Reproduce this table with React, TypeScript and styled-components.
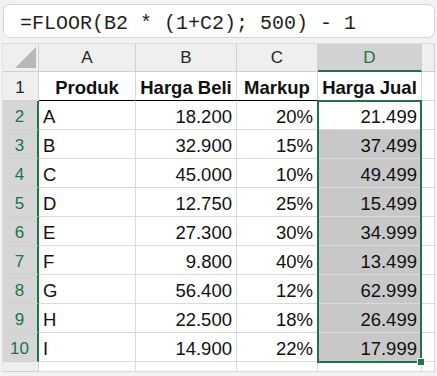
import { Fragment } from 'react'
import styled, { createGlobalStyle } from 'styled-components'

const GlobalStyle = createGlobalStyle`
  html, body {
    margin: 0;
    padding: 0;
    background: #f2f2f2;
  }
`

const rows = [
  { name: 'A', buy: '18.200', markup: '20%', sell: '21.499' },
  { name: 'B', buy: '32.900', markup: '15%', sell: '37.499' },
  { name: 'C', buy: '45.000', markup: '10%', sell: '49.499' },
  { name: 'D', buy: '12.750', markup: '25%', sell: '15.499' },
  { name: 'E', buy: '27.300', markup: '30%', sell: '34.999' },
  { name: 'F', buy: '9.800', markup: '40%', sell: '13.499' },
  { name: 'G', buy: '56.400', markup: '12%', sell: '62.999' },
  { name: 'H', buy: '22.500', markup: '18%', sell: '26.499' },
  { name: 'I', buy: '14.900', markup: '22%', sell: '17.999' },
]

const GREEN = '#217346'
const GRID = '#dadada'

const Page = styled.div`
  width: 437px;
  height: 376px;
  overflow: hidden;
  padding-top: 4px;
  box-sizing: border-box;
`

const FormulaBar = styled.div`
  margin: 0 2px 0 3px;
  height: 34px;
  box-sizing: border-box;
  background: #ffffff;
  border: 1px solid #d4d4d4;
  border-radius: 7px;
  padding: 6px 0 0 16px;
  font-family: 'Liberation Mono', monospace;
  font-size: 20px;
  line-height: 26px;
  color: #1f1f1f;
  white-space: pre;
`

const Sheet = styled.div`
  position: relative;
  margin: 5px 0 0 2px;
  width: 433px;
  display: grid;
  grid-template-columns: 36px 97px 101px 81px 104px 13px;
  grid-template-rows: 28px repeat(10, 29px) 10px;
  border-top: 1px solid #dcdcdc;
  border-left: 1px solid #e0e0e0;
  box-sizing: border-box;
  font-family: 'Liberation Sans', Arial, sans-serif;
`

const Corner = styled.div`
  background: #efefef;
  border-right: 1px solid #d0d0d0;
  border-bottom: 1px solid #d0d0d0;
  display: flex;
  align-items: flex-end;
  justify-content: flex-end;
  padding: 0 2px 3px 0;
  box-sizing: border-box;
`

const ColHeader = styled.div<{ $active?: boolean }>`
  background: ${(p) => (p.$active ? '#d2d2d2' : '#efefef')};
  color: ${(p) => (p.$active ? GREEN : '#262626')};
  border-right: 1px solid #d0d0d0;
  border-bottom: ${(p) => (p.$active ? `2px solid ${GREEN}` : '1px solid #d0d0d0')};
  box-sizing: border-box;
  font-size: 17px;
  line-height: 1;
  display: flex;
  align-items: flex-end;
  justify-content: center;
  padding-bottom: ${(p) => (p.$active ? '4px' : '5px')};
`

const RowHeader = styled.div<{ $active?: boolean }>`
  background: ${(p) => (p.$active ? '#d6d6d6' : '#efefef')};
  color: ${(p) => (p.$active ? GREEN : '#262626')};
  border-right: ${(p) => (p.$active ? `2px solid ${GREEN}` : '1px solid #d0d0d0')};
  border-bottom: 1px solid #d0d0d0;
  box-sizing: border-box;
  font-size: 17px;
  line-height: 1;
  display: flex;
  align-items: flex-end;
  justify-content: center;
  padding: 0 1px 4px 0;
`

const Cell = styled.div<{ $align?: 'left' | 'right' | 'center'; $bold?: boolean; $selected?: boolean; $head?: boolean }>`
  background: ${(p) => (p.$selected ? '#c8c8c8' : '#ffffff')};
  border-right: 1px solid ${GRID};
  border-bottom: 1px solid ${(p) => (p.$head ? '#000000' : GRID)};
  box-sizing: border-box;
  font-size: 18.5px;
  font-weight: ${(p) => (p.$bold ? 700 : 400)};
  color: #111111;
  line-height: 1;
  display: flex;
  align-items: flex-end;
  justify-content: ${(p) => (p.$align === 'right' ? 'flex-end' : p.$align === 'center' ? 'center' : 'flex-start')};
  padding: 0 4px 3px 4px;
  white-space: nowrap;
`

const SelectionBox = styled.div`
  position: absolute;
  left: 314px;
  top: 56px;
  width: 105px;
  height: 263px;
  border: 2px solid ${GREEN};
  box-sizing: border-box;
  pointer-events: none;
`

const FillHandle = styled.div`
  position: absolute;
  right: -5px;
  bottom: -5px;
  width: 6px;
  height: 6px;
  background: ${GREEN};
  border: 1px solid #ffffff;
`

const SelectAll = () => (
  <svg width="21" height="21" viewBox="0 0 21 21">
    <polygon points="21,0 21,21 0,21" fill="#b8b8b8" />
  </svg>
)

export default function App() {
  return (
    <Page>
      <GlobalStyle />
      <FormulaBar>=FLOOR(B2 * (1+C2); 500) - 1</FormulaBar>
      <Sheet>
        <Corner>
          <SelectAll />
        </Corner>
        <ColHeader>A</ColHeader>
        <ColHeader>B</ColHeader>
        <ColHeader>C</ColHeader>
        <ColHeader $active>D</ColHeader>
        <ColHeader />

        <RowHeader>1</RowHeader>
        <Cell $align="center" $bold $head>Produk</Cell>
        <Cell $align="center" $bold $head>Harga Beli</Cell>
        <Cell $align="center" $bold $head>Markup</Cell>
        <Cell $align="center" $bold $head>Harga Jual</Cell>
        <Cell />

        {rows.map((r, i) => (
          <Fragment key={r.name}>
            <RowHeader $active>{i + 2}</RowHeader>
            <Cell>{r.name}</Cell>
            <Cell $align="right">{r.buy}</Cell>
            <Cell $align="right">{r.markup}</Cell>
            <Cell $align="right" $selected={i > 0}>
              {r.sell}
            </Cell>
            <Cell />
          </Fragment>
        ))}

        <RowHeader />
        <Cell />
        <Cell />
        <Cell />
        <Cell />
        <Cell />

        <SelectionBox>
          <FillHandle />
        </SelectionBox>
      </Sheet>
    </Page>
  )
}
